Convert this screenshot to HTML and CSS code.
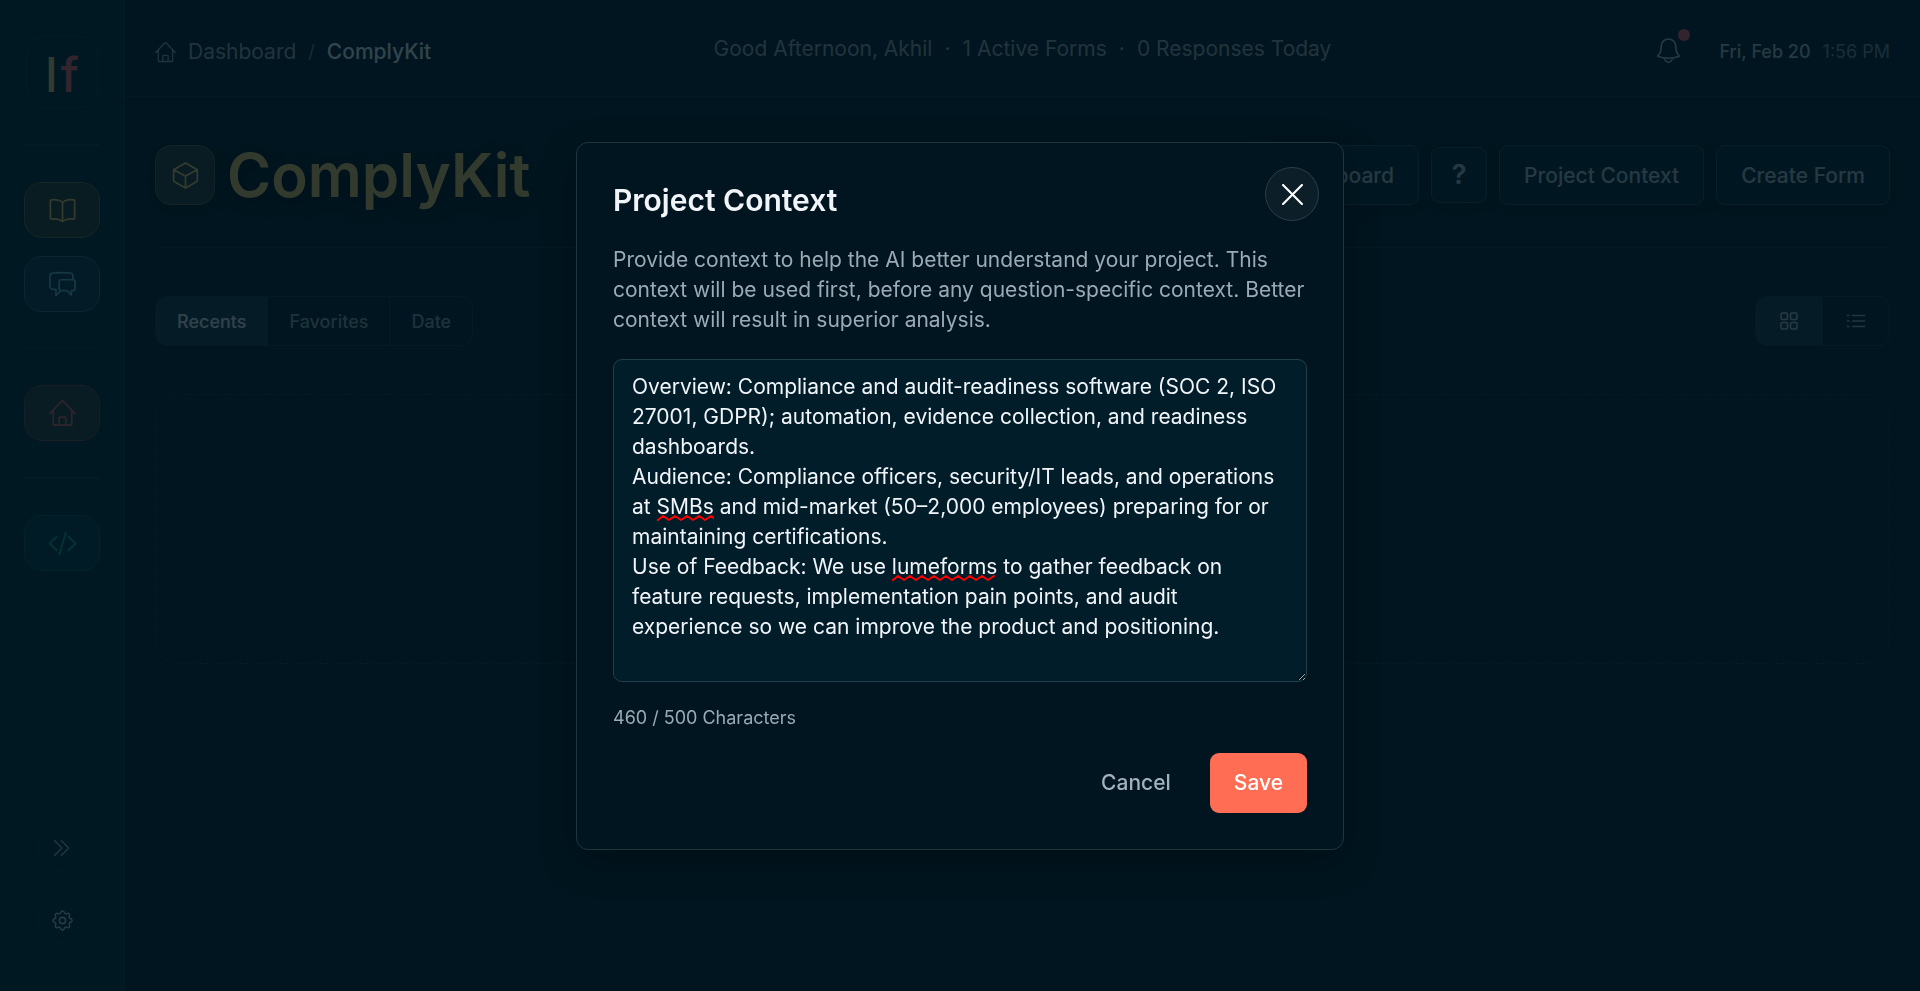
FILE: index.html
```
<!DOCTYPE html>
<html lang="en">
<head>
  <meta charset="UTF-8"/>
  <meta name="viewport" content="width=device-width, initial-scale=1.0"/>
  <title>ComplyKit - Project Context</title>
  <link rel="stylesheet" href="styles.css">
</head>
<body>

  <div class="app">
    <!-- Sidebar -->
    <aside class="sidebar">
      <a class="logo" href="#" aria-label="Home"><span class="logo-l">l</span><span class="logo-f">f</span></a>
      <div class="divider"></div>
      <nav class="side-nav">
        <a class="side-link guide" href="#" aria-label="Guide">
          <svg class="icon" viewBox="0 0 24 24"><path d="M12 4.5C9.2 2.4 5.3 2 2.1 2.5a1 1 0 0 0-.9 1v15.2a.9.9 0 0 0 1 .9c3-.4 7-.1 9.8 2.1 2.8-2.2 6.8-2.5 9.8-2.1a.9.9 0 0 0 1-.9V3.5a1 1 0 0 0-.9-1C18.7 2 14.8 2.4 12 4.5zM12 4.5v17.2"/></svg>
        </a>
        <a class="side-link chat" href="#" aria-label="Messages">
          <svg class="icon" viewBox="0 0 24 24"><path d="M21.2 7.6V4.3a2.5 2.5 0 0 0-2.5-2.5c-5-.5-10-.5-15 0A3 3 0 0 0 .8 4.8v8.6a3 3 0 0 0 3 3h2.4V22l4.1-4.3M11 7.8h10.2a2 2 0 0 1 2 2v5.6a2 2 0 0 1-2 2h-1.4v3.9l-3.8-3.9h-5a2 2 0 0 1-2-2V9.8a2 2 0 0 1 2-2z"/></svg>
        </a>
      </nav>
      <div class="divider thin"></div>
      <a class="side-link home" href="#" aria-label="Dashboard">
        <svg class="icon" viewBox="0 0 24 24"><path d="M.8 12 11.2 1.2a1.1 1.1 0 0 1 1.6 0L23.2 12M3.8 9v12.5a.8.8 0 0 0 .8.8h14.8a.8.8 0 0 0 .8-.8V9M9 22.3v-6.2a.8.8 0 0 1 .8-.8h4.4a.8.8 0 0 1 .8.8v6.2"/></svg>
      </a>
      <div class="divider"></div>
      <a class="side-link code" href="#" aria-label="Embed code">
        <svg class="icon" viewBox="0 0 24 24"><path d="M6.8 5.8.5 12l6.3 6.2M15 2.2 9.2 21.8M17.2 5.8l6.3 6.2-6.3 6.2"/></svg>
      </a>
      <div class="side-bottom">
        <button class="round-btn" aria-label="Expand sidebar">
          <svg class="icon-sm" viewBox="0 0 24 24"><path d="m2 2 10 10L2 22M11 2l10 10-10 10"/></svg>
        </button>
        <button class="round-btn" aria-label="Settings">
          <svg class="icon-gear" viewBox="2 2 20 20"><path d="M10.325 4.317c.426-1.756 2.924-1.756 3.35 0a1.724 1.724 0 0 0 2.573 1.066c1.543-.94 3.31.826 2.37 2.37a1.724 1.724 0 0 0 1.065 2.572c1.756.426 1.756 2.924 0 3.35a1.724 1.724 0 0 0-1.066 2.573c.94 1.543-.826 3.31-2.37 2.37a1.724 1.724 0 0 0-2.572 1.065c-.426 1.756-2.924 1.756-3.35 0a1.724 1.724 0 0 0-2.573-1.066c-1.543.94-3.31-.826-2.37-2.37a1.724 1.724 0 0 0-1.065-2.572c-1.756-.426-1.756-2.924 0-3.35a1.724 1.724 0 0 0 1.066-2.573c-.94-1.543.826-3.31 2.37-2.37 1 .608 2.296.07 2.572-1.065z"/><circle cx="12" cy="12" r="3"/></svg>
        </button>
      </div>
    </aside>

    <div class="page">
      <!-- Top bar -->
      <header class="topbar">
        <nav class="crumbs">
          <a href="#">
            <svg class="icon-crumb" viewBox="0 0 24 24"><path d="M.8 12 11.2 1.2a1.1 1.1 0 0 1 1.6 0L23.2 12M3.8 9v12.5a.8.8 0 0 0 .8.8h14.8a.8.8 0 0 0 .8-.8V9M9 22.3v-6.2a.8.8 0 0 1 .8-.8h4.4a.8.8 0 0 1 .8.8v6.2"/></svg>
            Dashboard
          </a>
          <span class="slash">/</span>
          <span class="current">ComplyKit</span>
        </nav>
        <p class="greeting"><span>Good Afternoon, Akhil</span><span>·</span><span>1 Active Forms</span><span>·</span><span>0 Responses Today</span></p>
        <div class="topbar-right">
          <button class="bell" aria-label="Notifications">
            <svg class="icon-bell" viewBox="0 0 24 24"><path d="M12 1a7 7 0 0 0-7 7c0 5-1 7.5-3.6 9.3 3 1.5 6.6 2.2 10.6 2.2s7.6-.7 10.6-2.2C20 15.5 19 13 19 8a7 7 0 0 0-7-7zM8.3 19.5a3.7 3.7 0 0 0 7.4 0"/></svg>
            <span class="dot"></span>
          </button>
          <div class="clock"><b>Fri, Feb 20</b><span>1:56 PM</span></div>
        </div>
      </header>

      <main class="content">
        <div class="title-row">
          <div class="cube">
            <svg class="icon" viewBox="0 0 24 24"><path d="M12 .8 22.5 6.8v10.4L12 23.2 1.5 17.2V6.8zM1.5 6.8 12 12.4l10.5-5.6M12 12.4v10.8"/></svg>
          </div>
          <h1>ComplyKit</h1>
          <div class="actions">
            <button class="btn">Dashboard</button>
            <button class="btn help">?</button>
            <button class="btn">Project Context</button>
            <button class="btn">Create Form</button>
          </div>
        </div>

        <div class="filter-row">
          <div class="segmented">
            <button class="active">Recents</button>
            <button>Favorites</button>
            <button>Date</button>
          </div>
          <div class="segmented view">
            <button class="active" aria-label="Grid view">
              <svg class="icon-view" viewBox="0 0 18 18"><rect x="1" y="1" width="6.5" height="6.5" rx="1.5"/><rect x="10.5" y="1" width="6.5" height="6.5" rx="1.5"/><rect x="1" y="10.5" width="6.5" height="6.5" rx="1.5"/><rect x="10.5" y="10.5" width="6.5" height="6.5" rx="1.5"/></svg>
            </button>
            <button aria-label="List view">
              <svg class="icon-view" viewBox="0 0 18 18"><path d="M5.5 3.5H18M5.5 9H18M5.5 14.5H18M.3 3.5h1.6M.3 9h1.6M.3 14.5h1.6"/></svg>
            </button>
          </div>
        </div>

        <div class="dropzone"></div>
      </main>
    </div>
  </div>

  <!-- Project context modal -->
  <div class="overlay">
    <form class="modal" role="dialog" aria-labelledby="modal-title">
      <button class="close" type="button" aria-label="Close">
        <svg viewBox="0 0 20 20"><path d="M1 1l18 18M19 1 1 19"/></svg>
      </button>
      <h2 id="modal-title">Project Context</h2>
      <label class="hint" for="context">Provide context to help the AI better understand your project. This context will be used first, before any question-specific context. Better context will result in superior analysis.</label>
      <div class="field">
        <textarea id="context" maxlength="500" spellcheck="false">Overview: Compliance and audit-readiness software (SOC 2, ISO 27001, GDPR); automation, evidence collection, and readiness dashboards.
Audience: Compliance officers, security/IT leads, and operations at SMBs and mid-market (50–2,000 employees) preparing for or maintaining certifications.
Use of Feedback: We use lumeforms to gather feedback on feature requests, implementation pain points, and audit experience so we can improve the product and positioning.</textarea>
        <!-- wavy marks under unknown words -->
        <svg class="typo typo-smbs" aria-hidden="true"><use href="#wave"/></svg>
        <svg class="typo typo-lumeforms" aria-hidden="true"><use href="#wave"/></svg>
      </div>
      <p class="count">460 / 500 Characters</p>
      <div class="modal-actions">
        <button class="cancel" type="button">Cancel</button>
        <button class="save" type="submit">Save</button>
      </div>
    </form>
  </div>

  <svg class="defs" aria-hidden="true">
    <defs><path id="wave" d="M-1 5h2l5-4 6 4 6-4 6 4 6-4 6 4 6-4 6 4 6-4 6 4 6-4 6 4 6-4 6 4 6-4 6 4 6-4"/></defs>
  </svg>

</body>
</html>
```

FILE: styles.css
```
* {
  box-sizing: border-box;
  margin: 0; padding: 0;
}

body {
  background: #00151f;
  color: #e8edf2;
  font-family: Inter, "Liberation Sans", sans-serif;
  font-size: 21px;
  line-height: 30px;
}

a { color: inherit; text-decoration: none; }

button {
  font: inherit;
  color: inherit;
  background: none;
  border: none;
  cursor: pointer;
}

svg {
  display: block;
  fill: none;
  stroke: currentColor;
  stroke-width: 1.5;
  stroke-linecap: round;
  stroke-linejoin: round;
}

.icon { width: 27px; height: 27px; }
.icon-crumb { width: 21px; height: 21px; }
.icon-sm { width: 18px; height: 18px; }
.icon-gear { width: 21px; height: 21px; }
.icon-bell { width: 25px; height: 25px; }
.icon-view { width: 18px; height: 18px; }
.defs { position: absolute; width: 0; height: 0; }

.app {
  display: flex;
  min-height: 100vh;
}

/* Sidebar */
.sidebar {
  width: 125px;
  flex: none;
  display: flex;
  flex-direction: column;
  align-items: center;
  padding: 36px 24px 47px;
  background: #00232d;
  border-right: 1px solid #10323e;
}

.logo {
  width: 72px;
  height: 72px;
  display: flex;
  align-items: center;
  justify-content: center;
  gap: 3px;
  padding-top: 6px;
  border: 1px solid #1a3844;
  border-radius: 18px;
  font-size: 48px;
  font-weight: 500;
}

.logo-l { color: #ffd26e; }
.logo-f { color: #ff6464; }

.divider {
  width: 76px;
  height: 2px;
  margin: 36px 0;
  background: #10323e;
}

.divider.thin { height: 1px; background: #163642; }

.side-nav {
  display: flex;
  flex-direction: column;
  gap: 18px;
}

.side-link {
  width: 76px;
  height: 56px;
  display: flex;
  align-items: center;
  justify-content: center;
  border: 1px solid;
  border-radius: 18px;
}

.guide { color: #ffd26e; background: #2d372d; border-color: #6e643c; }
.chat { color: #6ec3dc; background: #0a3448; border-color: #3c6878; }
.home { color: #f05a5f; background: #2d3732; border-color: #783c41; }
.code { color: #00b48c; background: #00363c; border-color: #00544b; }

.side-bottom {
  margin-top: auto;
  display: flex;
  flex-direction: column;
  gap: 24px;
}

.round-btn {
  width: 48px;
  height: 48px;
  display: flex;
  align-items: center;
  justify-content: center;
  border: 1px solid #163440;
  border-radius: 50%;
  color: #c3cdd2;
}

/* Top bar */
.page { flex: 1; min-width: 0; }

.topbar {
  height: 97px;
  display: grid;
  grid-template-columns: 1fr auto 1fr;
  align-items: center;
  padding: 8px 30px 0;
  border-bottom: 1px solid #0c2d38;
}

.crumbs {
  display: flex;
  align-items: center;
  gap: 12px;
  color: #a0aab4;
}

.crumbs a {
  display: flex;
  align-items: center;
  gap: 12px;
}

.crumbs .slash { font-size: 18px; color: #788791; }
.crumbs .current { color: #f5fafa; font-weight: 500; }

.greeting {
  display: flex;
  gap: 12px;
  padding-bottom: 6px;
  color: #a5acb0;
}

.topbar-right {
  display: flex;
  align-items: center;
  justify-content: flex-end;
  gap: 38px;
  font-size: 18px;
}

.bell {
  position: relative;
  margin-bottom: 3px;
  color: #becdd2;
}

.dot {
  position: absolute;
  top: -9px;
  right: -9px;
  width: 12px;
  height: 12px;
  border-radius: 50%;
  background: #ff5a5f;
}

.clock { display: flex; gap: 12px; color: #82929a; }
.clock b { color: #bec8cd; font-weight: 500; }

/* Page content */
.content { padding: 48px 30px; }

.title-row {
  display: flex;
  align-items: center;
  gap: 12px;
  padding-bottom: 42px;
  border-bottom: 1px solid #0c2d38;
}

.cube {
  width: 60px;
  height: 60px;
  display: flex;
  align-items: center;
  justify-content: center;
  color: #ffd26e;
  background: #2d3732;
  border: 1px solid #645a3c;
  border-radius: 16px;
  box-shadow: 0 4px 12px rgba(0, 0, 0, 0.4);
}

h1 {
  color: #fac864;
  font-size: 60px;
  font-weight: 600;
  line-height: 60px;
  text-shadow: 0 6px 18px #000;
}

.actions {
  margin-left: auto;
  display: flex;
  align-items: center;
  gap: 12px;
}

.btn {
  height: 60px;
  padding: 2px 24px 0;
  color: #bec8cd;
  background: #00202c;
  border: 1px solid #284650;
  border-radius: 9px;
  box-shadow: 0 4px 12px rgba(0, 0, 0, 0.4);
  font-weight: 500;
}

.btn.help {
  width: 56px;
  height: 56px;
  padding: 0;
  font-size: 27px;
  font-weight: 600;
}

.filter-row {
  display: flex;
  justify-content: space-between;
  margin: 48px 0;
}

.segmented {
  display: flex;
  height: 50px;
  overflow: hidden;
  color: #96a5af;
  border: 1px solid #143440;
  border-radius: 12px;
  font-size: 18px;
  font-weight: 500;
}

.segmented button {
  padding: 2px 21px 0;
  border-left: 1px solid #143440;
}

.segmented button:first-child { border-left: none; }
.segmented .active { color: #f0f5f8; background: #193a46; }
.segmented.view button { padding: 0 24px; color: #a5b4be; }
.segmented.view button.active { color: #c3cdd2; }

.dropzone {
  height: 270px;
  border: 1px dashed #143440;
  border-radius: 24px;
}

/* Modal */
.overlay {
  position: fixed;
  inset: 0;
  display: flex;
  align-items: center;
  justify-content: center;
  padding-top: 1px;
  background: rgba(0, 21, 31, 0.8);
}

.modal {
  position: relative;
  width: 768px;
  padding: 36px;
  background: #00151f;
  border: 1px solid #1e3640;
  border-radius: 12px;
  box-shadow: 0 12px 36px rgba(0, 0, 0, 0.25);
}

.close {
  position: absolute;
  top: 24px;
  right: 24px;
  width: 54px;
  height: 54px;
  display: flex;
  align-items: center;
  justify-content: center;
  color: #fff;
  background: #0c1f29;
  border: 1px solid #2c3e47;
  border-radius: 50%;
}

.close svg { width: 21px; height: 21px; stroke-width: 2; }

h2 {
  margin-bottom: 24px;
  color: #f1f5f9;
  font-size: 30px;
  font-weight: 600;
  line-height: 42px;
}

.hint {
  display: block;
  margin-bottom: 24px;
  color: #9caab6;
}

.field { position: relative; }

textarea {
  display: block;
  width: 100%;
  height: 323px;
  padding: 12px 18px;
  color: #f1f5f9;
  background: #001d29;
  border: 1px solid #1f404c;
  border-radius: 9px;
  font: inherit;
  resize: vertical;
  outline: none;
}

.typo {
  position: absolute;
  height: 6px;
  overflow: hidden;
  stroke: #f00;
  stroke-width: 2;
  pointer-events: none;
}

.typo-smbs { top: 156px; left: 44px; width: 57px; }
.typo-lumeforms { top: 216px; left: 279px; width: 105px; }

.count {
  margin: 21px 0 20px;
  color: #9caab6;
  font-size: 18px;
}

.modal-actions {
  display: flex;
  justify-content: flex-end;
  gap: 15px;
  font-weight: 500;
}

.cancel, .save {
  height: 60px;
  padding: 0 24px;
  border-radius: 9px;
}

.cancel { color: #a3b1bd; }
.save { color: #fff; background: #ff6e54; }
```
